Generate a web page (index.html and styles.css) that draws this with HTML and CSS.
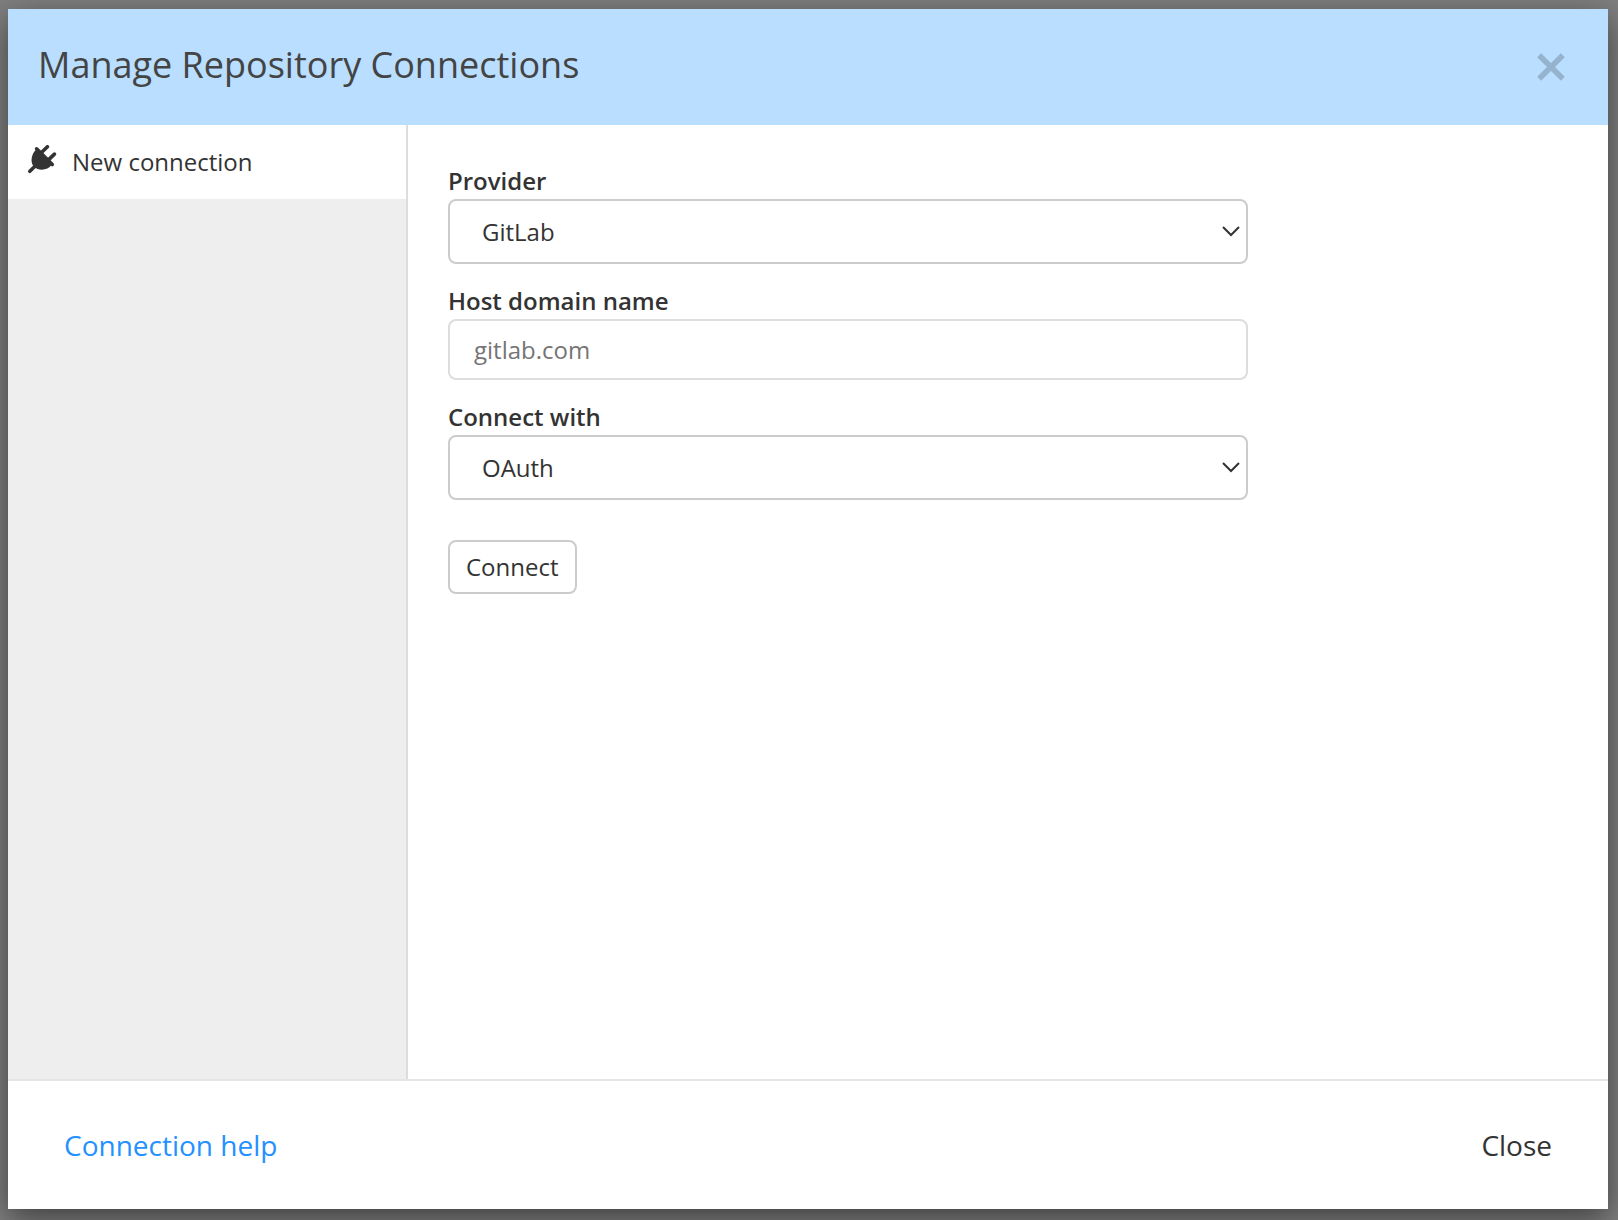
FILE: index.html
```
<!DOCTYPE html>
<html lang="en">
<head>
<meta charset="utf-8">
<meta name="viewport" content="width=device-width, initial-scale=1">
<title>Manage Repository Connections</title>
<link rel="stylesheet" href="styles.css">
</head>
<body>
<div class="modal" role="dialog" aria-labelledby="modal-title">
  <header class="modal-header">
    <h1 class="modal-title" id="modal-title">Manage Repository Connections</h1>
    <button class="dismiss" type="button" aria-label="Dismiss">
      <svg width="30" height="30" viewBox="0 0 30 30" aria-hidden="true"><path d="M3.2 3.2 26.8 26.8M26.8 3.2 3.2 26.8" fill="none" stroke="#96b3cd" stroke-width="5.6"/></svg>
    </button>
  </header>
  <div class="modal-body">
    <nav class="sidebar">
      <button class="sidebar-item" type="button">
        <svg class="plug" width="30" height="30" viewBox="0 0 30 30" aria-hidden="true">
          <g fill="none" stroke="#333" stroke-linecap="round">
            <path d="M2.800 26.300 8 21.300" stroke-width="3.600"/>
            <path d="M9.600 3.800 25.300 19.500" stroke-width="3.600"/>
            <path d="M14.500 7.500 20.400 1.800M21.200 15.100 27.400 9.100" stroke-width="3.600"/>
          </g>
          <path d="M9 4.500 24.500 20C21 25.200 12 26.500 7 21.700 2.800 17.500 4.300 9.200 9 4.500z" fill="#333"/>
        </svg>
        <span>New connection</span>
      </button>
    </nav>
    <main class="content">
      <form class="form">
        <div class="field">
          <label for="provider">Provider</label>
          <div class="select">
            <select id="provider"><option>GitLab</option></select>
            <svg class="chevron" width="18" height="12" viewBox="0 0 18 12" aria-hidden="true"><path d="M1 1 9 9 17 1" fill="none" stroke="#333" stroke-width="2"/></svg>
          </div>
        </div>
        <div class="field">
          <label for="host">Host domain name</label>
          <input id="host" type="text" placeholder="gitlab.com">
        </div>
        <div class="field">
          <label for="method">Connect with</label>
          <div class="select">
            <select id="method"><option>OAuth</option></select>
            <svg class="chevron" width="18" height="12" viewBox="0 0 18 12" aria-hidden="true"><path d="M1 1 9 9 17 1" fill="none" stroke="#333" stroke-width="2"/></svg>
          </div>
        </div>
        <button class="connect" type="button">Connect</button>
      </form>
    </main>
  </div>
  <footer class="modal-footer">
    <a class="help" href="#">Connection help</a>
    <button class="close" type="button">Close</button>
  </footer>
</div>
</body>
</html>
```
FILE: styles.css
```
* {
  box-sizing: border-box;
}

body {
  display: flex;
  min-height: 100vh;
  margin: 0;
  padding: 9px 10px 11px 8px;
  background: #7f7f7f;
  color: #333;
  font-family: "Open Sans", sans-serif;
  font-size: 24px;
  line-height: 34px;
}

button,
input,
select {
  margin: 0;
  color: inherit;
  font: inherit;
}

.modal {
  display: flex;
  flex: 1;
  flex-direction: column;
  background: #fff;
  box-shadow: 0 10px 30px rgba(0, 0, 0, 0.5);
}

.modal-header {
  display: flex;
  align-items: center;
  justify-content: space-between;
  padding: 32px 42px 36px 30px;
  background: #b9deff;
}

.modal-title {
  margin: 0;
  color: #444;
  font-size: 36px;
  font-weight: 400;
  line-height: 48px;
}

.dismiss {
  display: flex;
  padding: 4px 0 0;
  border: 0;
  background: none;
}

.modal-body {
  display: flex;
  flex: 1;
}

.sidebar {
  flex: 0 0 25%;
  border-right: 2px solid #ddd;
  background: #eee;
}

.sidebar-item {
  display: flex;
  gap: 15px;
  width: 100%;
  padding: 20px;
  border: 0;
  background: #fff;
  text-align: left;
}

.plug {
  flex: none;
  margin-left: -1px;
}

.content {
  flex: 1;
  padding: 40px;
}

.form {
  display: flex;
  flex-direction: column;
  gap: 21px;
  max-width: 800px;
}

.field {
  display: flex;
  flex-direction: column;
}

.field label {
  align-self: flex-start;
  padding-bottom: 2px;
  font-weight: 600;
  line-height: 32px;
}

.select {
  position: relative;
}

.select select,
.field input,
.connect {
  border: 2px solid #ccc;
  border-radius: 8px;
  background: #fff;
}

.select select {
  display: block;
  width: 100%;
  height: 65px;
  padding: 0 32px;
  appearance: none;
}

.chevron {
  position: absolute;
  top: 27px;
  right: 8px;
  pointer-events: none;
}

.field input {
  height: 61px;
  padding: 0 24px;
  border-color: #ddd;
}

.field input::placeholder {
  color: #757575;
}

.connect {
  align-self: flex-start;
  margin-top: 19px;
  padding: 8px 16px;
}

.modal-footer {
  display: flex;
  align-items: center;
  justify-content: space-between;
  padding: 44px 56px;
  border-top: 2px solid #e5e5e5;
  font-size: 28px;
  line-height: 40px;
}

.help {
  color: #2491ff;
  text-decoration: none;
}

.close {
  padding: 0;
  border: 0;
  background: none;
}
```
